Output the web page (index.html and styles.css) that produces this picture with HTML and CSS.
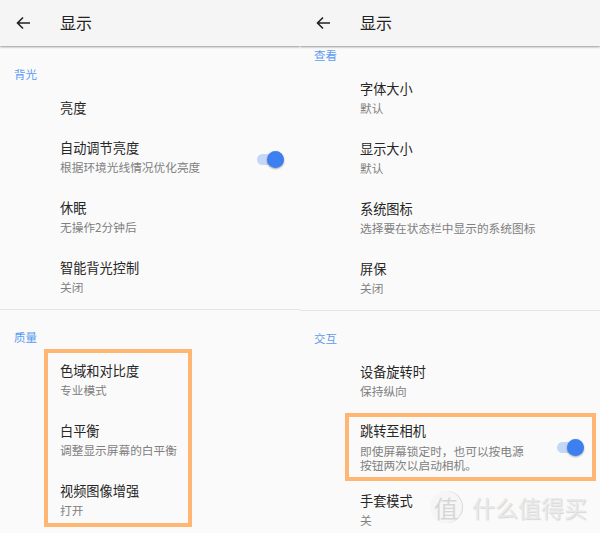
FILE: index.html
```html
<!doctype html>
<html lang="zh-CN">
<head>
    <meta charset="UTF-8">
    <title>显示</title>
    <link rel="stylesheet" href="styles.css">
</head>
<body>
<div class="screens">

    <!-- Left screen -->
    <div class="screen">
        <div class="topbar">
            <svg class="back" width="16" height="16" viewBox="0 0 16 16"><path d="M15 8H2.5M8 2.5L2.5 8l5.5 5.5" fill="none" stroke="#222" stroke-width="1.6"/></svg>
            <span class="topbar-title">显示</span>
        </div>
        <div class="section-label first">背光</div>
        <div class="row short"><div class="row-text"><div class="row-title">亮度</div></div></div>
        <div class="row">
            <div class="row-text">
                <div class="row-title">自动调节亮度</div>
                <div class="row-sub">根据环境光线情况优化亮度</div>
            </div>
            <div class="toggle"><span class="knob"></span></div>
        </div>
        <div class="row"><div class="row-text"><div class="row-title">休眠</div><div class="row-sub">无操作2分钟后</div></div></div>
        <div class="row"><div class="row-text"><div class="row-title">智能背光控制</div><div class="row-sub">关闭</div></div></div>
        <div class="divider"></div>
        <div class="section-label">质量</div>
        <div class="row"><div class="row-text"><div class="row-title">色域和对比度</div><div class="row-sub">专业模式</div></div></div>
        <div class="row"><div class="row-text"><div class="row-title">白平衡</div><div class="row-sub">调整显示屏幕的白平衡</div></div></div>
        <div class="row"><div class="row-text"><div class="row-title">视频图像增强</div><div class="row-sub">打开</div></div></div>
        <div class="mark mark-quality"></div>
    </div>

    <!-- Right screen -->
    <div class="screen">
        <div class="topbar">
            <svg class="back" width="16" height="16" viewBox="0 0 16 16"><path d="M15 8H2.5M8 2.5L2.5 8l5.5 5.5" fill="none" stroke="#222" stroke-width="1.6"/></svg>
            <span class="topbar-title">显示</span>
        </div>
        <div class="section-label scrolled">查看</div>
        <div class="row"><div class="row-text"><div class="row-title">字体大小</div><div class="row-sub">默认</div></div></div>
        <div class="row"><div class="row-text"><div class="row-title">显示大小</div><div class="row-sub">默认</div></div></div>
        <div class="row"><div class="row-text"><div class="row-title">系统图标</div><div class="row-sub">选择要在状态栏中显示的系统图标</div></div></div>
        <div class="row"><div class="row-text"><div class="row-title">屏保</div><div class="row-sub">关闭</div></div></div>
        <div class="divider"></div>
        <div class="section-label">交互</div>
        <div class="row"><div class="row-text"><div class="row-title">设备旋转时</div><div class="row-sub">保持纵向</div></div></div>
        <div class="row tall">
            <div class="row-text">
                <div class="row-title">跳转至相机</div>
                <div class="row-sub">即使屏幕锁定时，也可以按电源<br>按钮两次以启动相机。</div>
            </div>
            <div class="toggle"><span class="knob"></span></div>
        </div>
        <div class="row"><div class="row-text"><div class="row-title">手套模式</div><div class="row-sub">关</div></div></div>
        <div class="mark mark-camera"></div>
        <div class="watermark"><span class="watermark-badge">值</span><span class="watermark-text">什么值得买</span></div>
    </div>

</div>
</body>
</html>
```

FILE: styles.css
```css
body {
    margin: 0;
    background-color: #fafafa;
    font-family: "Noto Sans CJK SC", "Noto Sans", sans-serif;
}

.screens {
    display: flex;
    width: 600px;
    height: 533px;
    overflow: hidden;
}

.screen {
    position: relative;
    width: 300px;
    height: 533px;
    overflow: hidden;
}

/* Top bar */
.topbar {
    display: flex;
    align-items: center;
    height: 46px;
    background-color: #f5f5f5;
    box-shadow: 0 1px 2px rgba(0, 0, 0, 0.4);
}

.back {
    margin-left: 15px;
    margin-right: 29px;
}

.topbar-title {
    margin-top: -2px;
    font-size: 16px;
    color: #222;
}

/* Sections */
.section-label {
    height: 16px;
    padding: 19px 0 6px 14px;
    font-size: 11.5px;
    line-height: 16px;
    color: #5b9bf0;
}

.section-label.first {
    padding-top: 20px;
}

.section-label.scrolled {
    padding-top: 1px;
}

.divider {
    height: 1px;
    margin-top: 1px;
    background-color: #e4e4e4;
}

/* Rows */
.row {
    display: flex;
    align-items: center;
    justify-content: space-between;
    box-sizing: border-box;
    height: 60px;
    padding-left: 60px;
    padding-right: 16px;
}

.row.short {
    height: 40px;
}

.row.tall {
    height: 69px;
}

.row-text {
    margin-top: -2px;
}

.row.short .row-text {
    margin-top: 0;
}

.row.tall .row-text {
    margin-top: 2px;
}

.row-title {
    font-size: 13.2px;
    line-height: 16px;
    color: #262626;
}

.row-sub {
    margin-top: 4px;
    font-size: 11.7px;
    line-height: 14px;
    color: #808080;
}

.row.tall .row-sub {
    margin-top: 5px;
}

/* Switch */
.toggle {
    position: relative;
    width: 27px;
    height: 11px;
    margin-top: 2px;
    border-radius: 6px;
    background-color: #c4d7f7;
}

.knob {
    position: absolute;
    top: -3px;
    right: 0;
    width: 17px;
    height: 17px;
    border-radius: 50%;
    background-color: #3b7ff0;
    box-shadow: 0 1px 2px rgba(0, 0, 0, 0.35);
}

/* Orange annotation boxes */
.mark {
    position: absolute;
    box-sizing: border-box;
    border: 4px solid #ffb673;
}

.mark-quality {
    left: 44px;
    top: 349px;
    width: 148px;
    height: 178px;
}

.mark-camera {
    left: 45px;
    top: 413px;
    width: 251px;
    height: 68px;
}

/* Watermark */
.watermark {
    position: absolute;
    left: 130px;
    top: 491px;
    display: flex;
    align-items: center;
    gap: 10px;
}

.watermark-badge {
    display: flex;
    align-items: center;
    justify-content: center;
    width: 32px;
    height: 32px;
    border-radius: 50%;
    background-color: #f6f6f6;
    box-shadow: 1px 0 0 #d8d8d8;
    font-size: 24px;
    color: #d6d6d6;
}

.watermark-text {
    font-size: 23px;
    line-height: 32px;
    color: #e9e9e9;
    text-shadow: 1px 1px 1px #d6d6d6;
}
```
